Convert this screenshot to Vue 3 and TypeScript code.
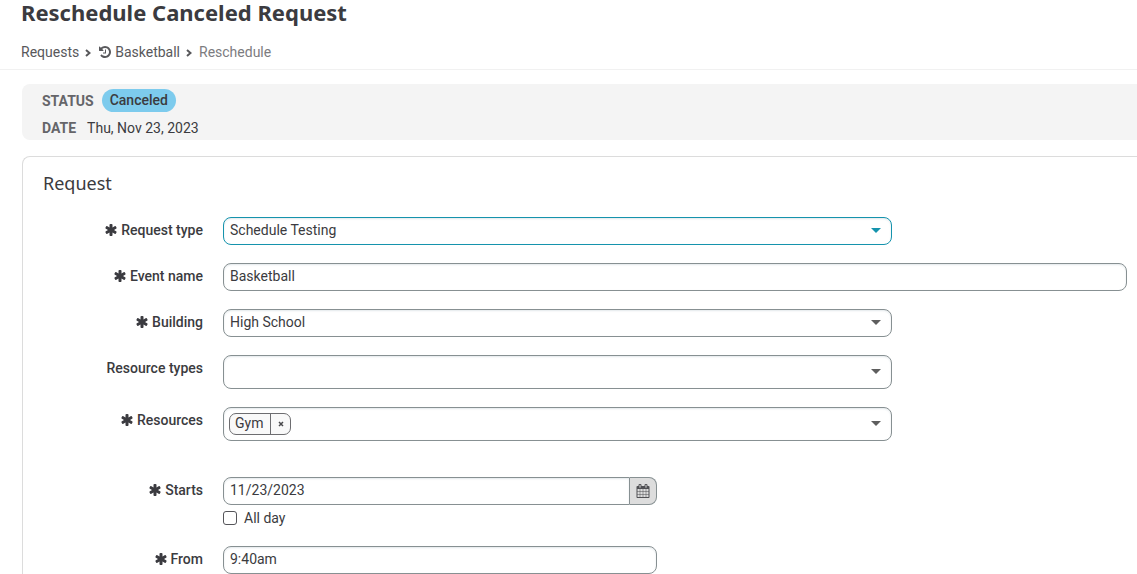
<script setup lang="ts">
import { ref } from 'vue'

const ASTERISK =
  'M1546 1050q46 26 59.5 77.5t-12.5 97.5l-64 110q-26 46-77.5 59.5t-97.5-12.5l-266-153v307q0 52-38 90t-90 38h-128q-52 0-90-38t-38-90v-307l-266 153q-46 26-97.5 12.5t-77.5-59.5l-64-110q-26-46-12.5-97.5t59.5-77.5l266-154-266-154q-46-26-59.5-77.5t12.5-97.5l64-110q26-46 77.5-59.5t97.5 12.5l266 153v-307q0-52 38-90t90-38h128q52 0 90 38t38 90v307l266-153q46-26 97.5-12.5t77.5 59.5l64 110q26 46 12.5 97.5t-59.5 77.5l-266 154z'
const HISTORY =
  'M1664 896q0 156-61 298t-164 245-245 164-298 61q-172 0-327-72.5t-264-204.5q-7-10-6.5-22.5t8.5-20.5l137-138q10-9 25-9 16 2 23 12 73 95 179 147t225 52q104 0 198.5-40.5t163.5-109.5 109.5-163.5 40.5-198.5-40.5-198.5-109.5-163.5-163.5-109.5-198.5-40.5q-98 0-188 35.5t-160 101.5l137 138q31 30 14 69-17 40-59 40h-448q-26 0-45-19t-19-45v-448q0-42 40-59 39-17 69 14l130 129q107-101 244.5-156.5t284.5-55.5q156 0 298 61t245 164 164 245 61 298zm-640-288v448q0 14-9 23t-23 9h-320q-14 0-23-9t-9-23v-64q0-14 9-23t23-9h224v-352q0-14 9-23t23-9h64q14 0 23 9t9 23z'
const CALENDAR =
  'M192 1664h288v-288h-288v288zm352 0h320v-288h-320v288zm-352-352h288v-320h-288v320zm352 0h320v-320h-320v320zm-352-384h288v-288h-288v288zm736 736h320v-288h-320v288zm-384-736h320v-288h-320v288zm768 736h288v-288h-288v288zm-384-352h320v-320h-320v320zm-352-864v-288q0-13-9.5-22.5t-22.5-9.5h-64q-13 0-22.5 9.5t-9.5 22.5v288q0 13 9.5 22.5t22.5 9.5h64q13 0 22.5-9.5t9.5-22.5zm736 864h288v-320h-288v320zm-384-384h320v-288h-320v288zm384 0h288v-288h-288v288zm32-480v-288q0-13-9.5-22.5t-22.5-9.5h-64q-13 0-22.5 9.5t-9.5 22.5v288q0 13 9.5 22.5t22.5 9.5h64q13 0 22.5-9.5t9.5-22.5zm384-64v1280q0 52-38 90t-90 38h-1408q-52 0-90-38t-38-90v-1280q0-52 38-90t90-38h128v-96q0-66 47-113t113-47h64q66 0 113 47t47 113v96h384v-96q0-66 47-113t113-47h64q66 0 113 47t47 113v96h128q52 0 90 38t38 90z'

interface Field {
  id: string
  label: string
  required: boolean
  kind: 'select' | 'text' | 'tags' | 'date' | 'time'
  active?: boolean
  tall?: boolean
}

const fields: Field[] = [
  { id: 'type', label: 'Request type', required: true, kind: 'select', active: true },
  { id: 'name', label: 'Event name', required: true, kind: 'text' },
  { id: 'building', label: 'Building', required: true, kind: 'select' },
  { id: 'resourceTypes', label: 'Resource types', required: false, kind: 'select', tall: true },
  { id: 'resources', label: 'Resources', required: true, kind: 'tags', tall: true },
  { id: 'starts', label: 'Starts', required: true, kind: 'date' },
  { id: 'from', label: 'From', required: true, kind: 'time' },
]

const values = ref<Record<string, string>>({
  type: 'Schedule Testing',
  name: 'Basketball',
  building: 'High School',
  resourceTypes: '',
  resources: '',
  starts: '11/23/2023',
  from: '9:40am',
})
const options: Record<string, string[]> = {
  type: ['Schedule Testing'],
  building: ['High School'],
  resourceTypes: [''],
}
const tags = ref<string[]>(['Gym'])
const allDay = ref(false)

function removeTag(tag: string): void {
  tags.value = tags.value.filter((t) => t !== tag)
}
</script>

<template>
  <div class="page">
    <header class="top">
      <h1>Reschedule Canceled Request</h1>
      <nav class="crumbs">
        <a href="#">Requests</a>
        <svg class="chevron" viewBox="0 0 6 8"><path d="M1 1l3.500 3L1 7" /></svg>
        <a href="#" class="with-icon">
          <svg class="icon" viewBox="0 0 1792 1792"><path :d="HISTORY" /></svg>
          <span>Basketball</span>
        </a>
        <svg class="chevron" viewBox="0 0 6 8"><path d="M1 1l3.500 3L1 7" /></svg>
        <span class="current">Reschedule</span>
      </nav>
    </header>

    <main>
      <dl class="status">
        <div class="pair">
          <dt>STATUS</dt>
          <dd class="badge">Canceled</dd>
        </div>
        <div class="pair wide">
          <dt>DATE</dt>
          <dd>Thu, Nov 23, 2023</dd>
        </div>
      </dl>

      <form class="card" @submit.prevent>
        <h2>Request</h2>
        <div v-for="f in fields" :key="f.id" class="row" :class="f.kind">
          <label :for="f.id">
            <svg v-if="f.required" class="icon" viewBox="0 0 1792 1792"><path :d="ASTERISK" /></svg>
            <span>{{ f.label }}</span>
          </label>

          <div v-if="f.kind === 'select'" class="control picker" :class="{ active: f.active, tall: f.tall }">
            <select :id="f.id" v-model="values[f.id]" class="box">
              <option v-for="o in options[f.id]" :key="o" :value="o">{{ o }}</option>
            </select>
            <svg class="caret" viewBox="0 0 10 5"><path d="M0 0h10L5 5z" /></svg>
          </div>

          <div v-else-if="f.kind === 'tags'" class="control picker tall">
            <div class="box tag-box">
              <span v-for="t in tags" :key="t" class="tag">
                <span class="tag-name">{{ t }}</span>
                <button type="button" :aria-label="`Remove ${t}`" @click="removeTag(t)">
                  <svg viewBox="0 0 6 6"><path d="M1 1l4 4M5 1L1 5" /></svg>
                </button>
              </span>
              <input :id="f.id" v-model="values[f.id]" type="text" />
            </div>
            <svg class="caret" viewBox="0 0 10 5"><path d="M0 0h10L5 5z" /></svg>
          </div>

          <div v-else-if="f.kind === 'date'" class="control half">
            <div class="group">
              <input :id="f.id" v-model="values[f.id]" class="box" type="text" />
              <button type="button" aria-label="Open calendar">
                <svg class="icon" viewBox="0 0 1792 1792"><path :d="CALENDAR" /></svg>
              </button>
            </div>
            <label class="check">
              <input v-model="allDay" type="checkbox" />
              <span>All day</span>
            </label>
          </div>

          <div v-else class="control" :class="{ half: f.kind === 'time' }">
            <input :id="f.id" v-model="values[f.id]" class="box" type="text" />
          </div>
        </div>
      </form>
    </main>
  </div>
</template>

<style>
body {
  margin: 0;
  background: #fff;
}
</style>

<style scoped>
* {
  box-sizing: border-box;
}
.page {
  display: flex;
  flex-direction: column;
  min-height: 100vh;
  font: 14px/20px Roboto, sans-serif;
  color: #3b3b40;
}
.icon {
  width: 14px;
  height: 14px;
  fill: currentColor;
  flex: none;
}
.top {
  padding: 0 21px 7px;
  border-bottom: 1px solid #f1f1f1;
}
h1,
h2 {
  margin: 0;
  font-family: "Noto Sans", sans-serif;
}
h1 {
  font-size: 22px;
  line-height: 24px;
  font-weight: 700;
}
.crumbs {
  display: flex;
  align-items: center;
  margin-top: 18px;
}
.crumbs a {
  color: #58585b;
  text-decoration: none;
}
.with-icon {
  display: flex;
  align-items: center;
  gap: 3px;
}
.chevron {
  width: 6px;
  height: 8px;
  margin: 2px 7px 0 6px;
  fill: none;
  stroke: #58585b;
  stroke-width: 2;
}
.current {
  color: #7c7c80;
}
main {
  flex: 1;
  display: flex;
  flex-direction: column;
  gap: 16px;
  padding: 14px 0 0 22px;
}
.status {
  margin: 0;
  padding: 5px 20px 2px;
  background: #f4f4f4;
  border-radius: 8px 0 0 8px;
}
.pair {
  display: flex;
  align-items: center;
  gap: 8px;
}
.wide {
  gap: 11px;
  margin-top: 6px;
}
dt {
  font-weight: 700;
  color: #656569;
}
dd {
  margin: 0;
}
.badge {
  padding: 1px 8px 2px;
  border-radius: 12px;
  background: #7dcbed;
  font-weight: 500;
}
.card {
  flex: 1;
  border: 1px solid #dcdcdc;
  border-width: 1px 0 0 1px;
  border-radius: 8px 0 0;
  padding: 14px 10px 0 20px;
}
h2 {
  margin-bottom: 22px;
  font-size: 18px;
  line-height: 24px;
  font-weight: 400;
}
.row {
  display: grid;
  grid-template-columns: 160px minmax(0, 1fr);
  column-gap: 20px;
  align-items: start;
  margin-bottom: 18px;
}
.tags {
  margin-bottom: 36px;
}
.time {
  margin-bottom: 0;
}
.row > label {
  display: flex;
  justify-content: flex-end;
  align-items: center;
  gap: 3px;
  line-height: 26px;
  font-weight: 500;
}
.picker {
  position: relative;
  width: 74%;
}
.half {
  width: 48%;
}
.box {
  display: block;
  width: 100%;
  height: 28px;
  padding: 0 6px 2px;
  border: 1px solid #879092;
  border-radius: 8px;
  background: #fff;
  box-shadow: inset 0 1px 2px rgba(60, 90, 110, 0.14);
  font: inherit;
  color: inherit;
  outline: none;
}
select.box {
  appearance: none;
}
.tall .box {
  height: 34px;
}
.active .box {
  border-color: #1593ad;
}
.caret {
  position: absolute;
  top: 0;
  bottom: 2px;
  right: 11px;
  width: 10px;
  height: 5px;
  margin: auto 0;
  fill: #5e5e5e;
  pointer-events: none;
}
.active .caret {
  fill: #1593ad;
}
.tag-box {
  display: flex;
  align-items: center;
  gap: 6px;
  padding: 0 30px 0 5px;
}
.tag-box input {
  flex: 1;
  min-width: 0;
  border: 0;
  padding: 0;
  background: none;
  font: inherit;
  color: inherit;
  outline: none;
}
.tag {
  display: flex;
  height: 22px;
  border: 1px solid #6d6d70;
  border-radius: 7px;
  background: #f9f9f9;
  overflow: hidden;
}
.tag-name {
  padding: 0 7px 0 5px;
  line-height: 18px;
}
.tag button {
  display: flex;
  align-items: center;
  justify-content: center;
  width: 20px;
  padding: 0;
  border: 0;
  border-left: 1px solid #6d6d70;
  background: none;
}
.tag button svg {
  width: 6px;
  height: 6px;
  fill: none;
  stroke: #4a4a4d;
  stroke-width: 1.500;
}
.group {
  display: flex;
}
.group .box {
  flex: 1;
  min-width: 0;
  border-radius: 8px 0 0 8px;
}
.group button {
  display: flex;
  align-items: center;
  justify-content: center;
  width: 27px;
  padding: 0;
  border: 1px solid #879092;
  border-left: 0;
  border-radius: 0 8px 8px 0;
  background: #ddd;
  color: #505054;
}
.check {
  display: flex;
  width: fit-content;
  align-items: center;
  gap: 7px;
  margin-top: 3px;
}
.check input {
  appearance: none;
  width: 14px;
  height: 14px;
  margin: 0;
  border: 1px solid #55555a;
  border-radius: 3px;
  background: #fff;
}
.check input:checked {
  background: #1593ad;
}
</style>
